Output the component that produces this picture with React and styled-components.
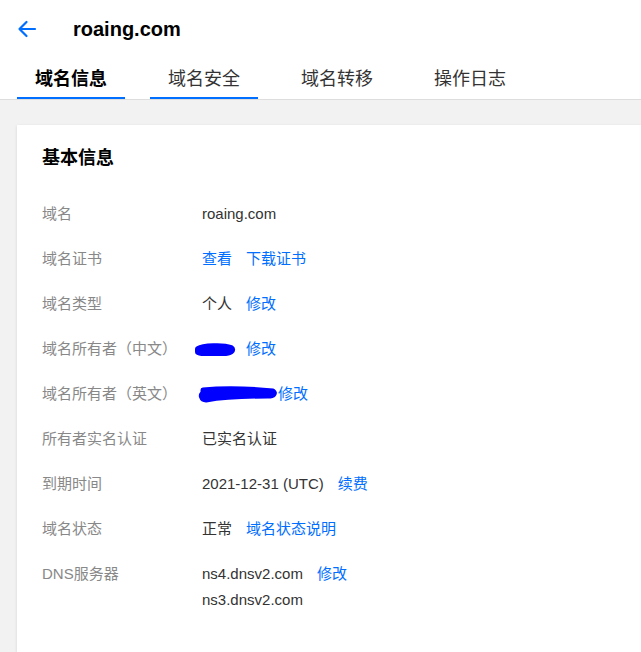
import React from 'react';
import styled, { createGlobalStyle } from 'styled-components';

const GlobalStyle = createGlobalStyle`
  html, body {
    margin: 0;
    padding: 0;
    background: #f2f2f2;
    overflow: hidden;
  }
  body {
    font-family: 'Liberation Sans', 'Noto Sans CJK SC', sans-serif;
    color: #333;
  }
`;

const Page = styled.div`
  height: 652px;
  display: flex;
  flex-direction: column;
  background: #f2f2f2;
`;

const Header = {
  container: styled.div`
    background: #fff;
    border-bottom: 1px solid #dddddd;
    padding: 0 0 0 17px;
  `,
  titleRow: styled.div`
    display: flex;
    align-items: center;
    height: 58px;
  `,
  back: styled.button`
    border: 0;
    background: none;
    padding: 0;
    width: 20px;
    height: 20px;
    display: flex;
    align-items: center;
    cursor: pointer;
    margin-top: -1px;
  `,
  title: styled.h1`
    margin: 0 0 0 36px;
    font-size: 20px;
    font-weight: bold;
    color: #000;
  `,
  tabs: styled.div`
    display: flex;
    gap: 25px;
    height: 41px;
  `,
};

const Tab = styled.div`
  width: 108px;
  display: flex;
  align-items: center;
  justify-content: center;
  font-size: 18px;
  font-weight: ${(p) => (p.$bold ? 'bold' : 'normal')};
  color: ${(p) => (p.$bold ? '#000' : '#333')};
  border-bottom: 2px solid ${(p) => (p.$line ? '#006eff' : 'transparent')};
  box-sizing: border-box;
  padding-bottom: 2px;
`;

const Card = {
  container: styled.div`
    flex: 1;
    margin: 25px 0 0 17px;
    background: #fff;
    box-shadow: 0 1px 3px rgba(0, 0, 0, 0.12);
    padding: 21px 25px 0;
    box-sizing: border-box;
  `,
  title: styled.h2`
    margin: 0 0 31px;
    font-size: 18px;
    font-weight: bold;
    color: #000;
    line-height: 24px;
  `,
};

const Row = styled.div`
  display: flex;
  align-items: flex-start;
  font-size: 15px;
  line-height: 26px;
  margin-bottom: 19px;
`;

const Label = styled.div`
  width: 160px;
  flex: none;
  color: #888;
`;

const Value = styled.div`
  display: flex;
  flex-direction: column;
  color: #333;
`;

const Line = styled.div`
  display: flex;
  align-items: center;
  gap: ${(p) => p.$gap || '14px'};
  margin-left: ${(p) => p.$shift || '0'};
`;

const Link = styled.a`
  color: #006eff;
  text-decoration: none;
  cursor: pointer;
`;

const Scribble = styled.svg`
  display: block;
  flex: none;
`;

const BackArrow = () => (
  <svg width="20" height="20" viewBox="0 0 20 20" fill="none">
    <path
      d="M18 10H2.5M9.5 3L2.5 10l7 7"
      stroke="#006eff"
      strokeWidth="2.2"
      strokeLinecap="round"
      strokeLinejoin="round"
    />
  </svg>
);

const rows = [
  { label: '域名', value: <Line>roaing.com</Line> },
  {
    label: '域名证书',
    value: (
      <Line>
        <Link>查看</Link>
        <Link>下载证书</Link>
      </Line>
    ),
  },
  {
    label: '域名类型',
    value: (
      <Line>
        个人<Link>修改</Link>
      </Line>
    ),
  },
  {
    label: '域名所有者（中文）',
    value: (
      <Line $gap="9px" $shift="-9px">
        <Scribble width="44" height="14" viewBox="0 0 44 14">
          <path d="M5 7 C 10 4, 30 3, 38 6 C 41 8, 38 11, 30 11 C 20 12, 10 12, 5 10 Z" fill="#0000ff" stroke="#0000ff" strokeWidth="6" strokeLinejoin="round" />
        </Scribble>
        <Link>修改</Link>
      </Line>
    ),
  },
  {
    label: '域名所有者（英文）',
    value: (
      <Line $gap="0" $shift="-4px">
        <Scribble width="80" height="20" viewBox="0 0 80 20">
          <path d="M5 6 C 25 4, 55 5, 75 7 C 78 9, 76 12, 70 12 C 50 12, 25 13, 8 16 C 3 16, 2 10, 5 9 Z" fill="#0000ff" stroke="#0000ff" strokeWidth="5" strokeLinejoin="round" />
        </Scribble>
        <Link>修改</Link>
      </Line>
    ),
  },
  { label: '所有者实名认证', value: <Line>已实名认证</Line> },
  {
    label: '到期时间',
    value: (
      <Line>
        2021-12-31 (UTC)<Link>续费</Link>
      </Line>
    ),
  },
  {
    label: '域名状态',
    value: (
      <Line>
        正常<Link>域名状态说明</Link>
      </Line>
    ),
  },
  {
    label: 'DNS服务器',
    value: (
      <>
        <Line>
          ns4.dnsv2.com<Link>修改</Link>
        </Line>
        <Line>ns3.dnsv2.com</Line>
      </>
    ),
  },
];

export default function App() {
  return (
    <Page>
      <GlobalStyle />
      <Header.container>
        <Header.titleRow>
          <Header.back aria-label="back">
            <BackArrow />
          </Header.back>
          <Header.title>roaing.com</Header.title>
        </Header.titleRow>
        <Header.tabs>
          <Tab $bold $line>域名信息</Tab>
          <Tab $line>域名安全</Tab>
          <Tab>域名转移</Tab>
          <Tab>操作日志</Tab>
        </Header.tabs>
      </Header.container>
      <Card.container>
        <Card.title>基本信息</Card.title>
        {rows.map((r) => (
          <Row key={r.label}>
            <Label>{r.label}</Label>
            <Value>{r.value}</Value>
          </Row>
        ))}
      </Card.container>
    </Page>
  );
}
